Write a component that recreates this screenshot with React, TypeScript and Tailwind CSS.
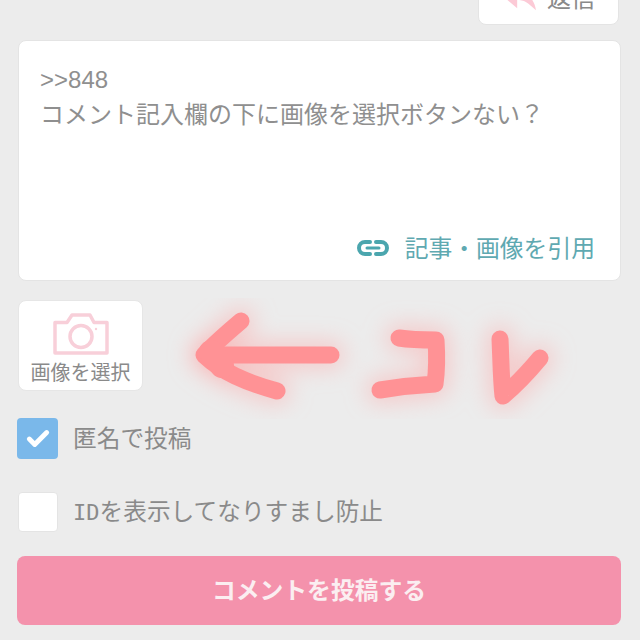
import React from 'react';
import { Check } from 'lucide-react';

const font = { fontFamily: '"Lato", "Noto Sans CJK JP", sans-serif' };

function CameraIcon() {
  return (
    <svg width="56" height="42" viewBox="0 0 56 42" fill="none" stroke="#f8cfd9" strokeWidth="3.5" strokeLinejoin="round">
      <path d="M2 9.5 H14 L19 2 H37 L41 9.5 H54 V40 H2 Z" />
      <circle cx="28" cy="23.5" r="11" />
      <circle cx="43" cy="16" r="1.2" fill="#f8cfd9" stroke="none" />
    </svg>
  );
}

function LinkIcon() {
  return (
    <svg width="36" height="18" viewBox="0 0 36 18" fill="none" stroke="#4ba6ae" strokeWidth="4" strokeLinecap="round">
      <path d="M15 3 H10 a6 6 0 0 0 0 12 H15" />
      <path d="M21 3 H26 a6 6 0 0 1 0 12 H21" />
      <path d="M12 9 H24" strokeWidth="3" />
    </svg>
  );
}

function Scribble() {
  const strokes = (
    <>
      <path d="M241 321 C228 332 214 344 204 355 C222 372 245 382 277 391" />
      <path d="M206 355 H331" />
      <path d="M211 352 L222 366" strokeWidth="24" />
      <path d="M399 338 C412 340 424 340 436 340 C437 355 437 370 435 384 C416 385 398 387 380 390" />
      <path d="M500 339 C501 360 501 378 503 396 C516 385 530 370 540 358" />
    </>
  );
  return (
    <svg className="absolute left-0 top-0 pointer-events-none" width="640" height="640" viewBox="0 0 640 640" fill="none" strokeLinecap="round" strokeLinejoin="round">
      <defs>
        <filter id="glow" x="-30%" y="-30%" width="160%" height="160%">
          <feGaussianBlur stdDeviation="11" />
        </filter>
      </defs>
      <g stroke="#fbb0b0" strokeOpacity="0.55" strokeWidth="28" filter="url(#glow)">{strokes}</g>
      <g stroke="#ff9295" strokeWidth="17">{strokes}</g>
    </svg>
  );
}

export default function App() {
  return (
    <div className="relative h-[640px] w-[640px] overflow-hidden bg-[#ececec]" style={font}>
      <div className="flex flex-col pl-[17px] pr-[19px]">
        <div className="flex justify-end pr-[2px]">
          <button className="-mt-[30px] flex h-[55px] w-[141px] items-center justify-center gap-[11px] rounded-lg border border-[#e4e4e4] bg-white pl-[2px] pt-[1px] text-[24px] text-[#8a8a8a]">
            <svg width="32" height="26" viewBox="0 0 34 26" fill="#fccad6">
              <path d="M0 12 L14 0 V6 C24 7 32 13 34 26 L26 19 C22 16 18 15 14 15 V24 Z" />
            </svg>
            返信
          </button>
        </div>

        <div className="ml-[1px] mt-[15px] flex h-[241px] flex-col rounded-lg border border-[#e4e4e4] bg-white pl-[21px] pr-[25px] pt-[21px]">
          <p className="text-[24px] leading-[34px] text-[#8f8f8f]">
            <span className="font-['Liberation_Sans']">&gt;&gt;848</span>
            <br />
            コメント記入欄の下に画像を選択ボタンない？
          </p>
          <div className="mt-auto mb-[15px] flex items-center justify-end gap-[14px] text-[23.8px] leading-[34px] text-[#5fa9b1]">
            <LinkIcon />
            <span>記事・画像を引用</span>
          </div>
        </div>

        <button className="ml-[1px] mt-[19px] flex h-[91px] w-[125px] flex-col items-center overflow-hidden rounded-lg border border-[#e6e6e6] bg-white pt-[12px] text-[20px] leading-[28px] text-[#8a8a8a]">
          <CameraIcon />
          <span className="mt-[3px] whitespace-nowrap">画像を選択</span>
        </button>

        <div className="mt-[27px] flex items-center gap-[15px]">
          <span className="flex h-[41px] w-[41px] items-center justify-center rounded bg-[#7ab8ea]">
            <Check className="h-[26px] w-[26px] text-white" strokeWidth={4.5} />
          </span>
          <span className="text-[23.7px] text-[#8a8a8a]">匿名で投稿</span>
        </div>

        <div className="mt-[33px] flex items-center gap-[15px] pl-[1px]">
          <span className="h-[40px] w-[40px] rounded-sm border border-[#e4e4e4] bg-white" />
          <span className="text-[23.7px] text-[#8a8a8a]">
            <span className="font-['DejaVu_Sans_Mono'] text-[22px]">ID</span>を表示してなりすまし防止
          </span>
        </div>

        <button className="mt-[24px] h-[69px] w-[604px] rounded-lg bg-[#f492ac] text-[23.8px] font-bold text-[#fbeef1]">
          コメントを投稿する
        </button>
      </div>
      <Scribble />
    </div>
  );
}
